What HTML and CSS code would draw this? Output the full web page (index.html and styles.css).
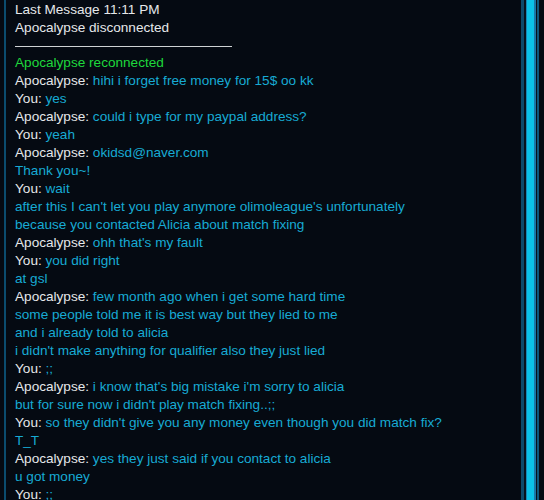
FILE: index.html
```html
<!DOCTYPE html>
<html>
<head>
<meta charset="utf-8">
<link rel="stylesheet" href="styles.css">
</head>
<body>
<div class="screen">
  <div class="edge-left"></div>
  <div class="log">
    <div class="row sys">Last Message 11:11 PM</div>
    <div class="row sys">Apocalypse disconnected</div>
    <div class="sep"></div>
    <div class="row ok">Apocalypse reconnected</div>
    <div class="row"><span class="who">Apocalypse:</span> hihi i forget free money for 15$ oo kk</div>
    <div class="row"><span class="who">You:</span> yes</div>
    <div class="row"><span class="who">Apocalypse:</span> could i type for my paypal address?</div>
    <div class="row"><span class="who">You:</span> yeah</div>
    <div class="row"><span class="who">Apocalypse:</span> okidsd@naver.com</div>
    <div class="row">Thank you~!</div>
    <div class="row"><span class="who">You:</span> wait</div>
    <div class="row">after this I can't let you play anymore olimoleague's unfortunately</div>
    <div class="row">because you contacted Alicia about match fixing</div>
    <div class="row"><span class="who">Apocalypse:</span> ohh that's my fault</div>
    <div class="row"><span class="who">You:</span> you did right</div>
    <div class="row">at gsl</div>
    <div class="row"><span class="who">Apocalypse:</span> few month ago when i get some hard time</div>
    <div class="row">some people told me it is best way but they lied to me</div>
    <div class="row">and i already told to alicia</div>
    <div class="row">i didn't make anything for qualifier also they just lied</div>
    <div class="row"><span class="who">You:</span> ;;</div>
    <div class="row"><span class="who">Apocalypse:</span> i know that's big mistake i'm sorry to alicia</div>
    <div class="row">but for sure now i didn't play match fixing..;;</div>
    <div class="row"><span class="who">You:</span> so they didn't give you any money even though you did match fix?</div>
    <div class="row">T_T</div>
    <div class="row"><span class="who">Apocalypse:</span> yes they just said if you contact to alicia</div>
    <div class="row">u got money</div>
    <div class="row"><span class="who">You:</span> ;;</div>
  </div>
  <div class="frame">
    <div class="f f1"></div>
    <div class="f f2"></div>
    <div class="f f3"></div>
    <div class="f f4"></div>
    <div class="f f5"></div>
    <div class="f f6"></div>
    <div class="f f7"></div>
    <div class="f f8"></div>
  </div>
</div>
</body>
</html>
```
FILE: styles.css
```css
html, body {
  margin: 0;
  padding: 0;
  background: #050a12;
}
.screen {
  display: flex;
  width: 544px;
  height: 500px;
  overflow: hidden;
  background: #050a12;
}
.edge-left {
  flex: 0 0 2px;
  margin-left: 4px;
  background: #0b4c6e;
}
.log {
  flex: 1;
  padding: 1px 0 0 9px;
  font-family: "Liberation Sans", Arial, sans-serif;
  font-size: 13.6px;
  line-height: 18px;
  color: #17aad4;
  white-space: nowrap;
  overflow: hidden;
}
.row {
  height: 18px;
}
.sys, .who {
  color: #e6e8ea;
}
.ok {
  color: #1ed83c;
}
.sep {
  width: 217px;
  height: 1px;
  margin: 9px 0 7px;
  background: #cfd2d4;
}
.frame {
  display: flex;
  flex: 0 0 23px;
}
.f { height: 100%; }
.f1 { width: 3px; background: #0d4a6a; }
.f2 { width: 2px; background: #07121c; }
.f3 { width: 1px; background: #1a86b4; }
.f4 { width: 7px; background: #0bc2e8; }
.f5 { width: 2px; background: #1a78a8; }
.f6 { width: 1px; background: #07121c; }
.f7 { width: 2px; background: #0e577c; }
.f8 { width: 5px; background: #050a12; }
```
